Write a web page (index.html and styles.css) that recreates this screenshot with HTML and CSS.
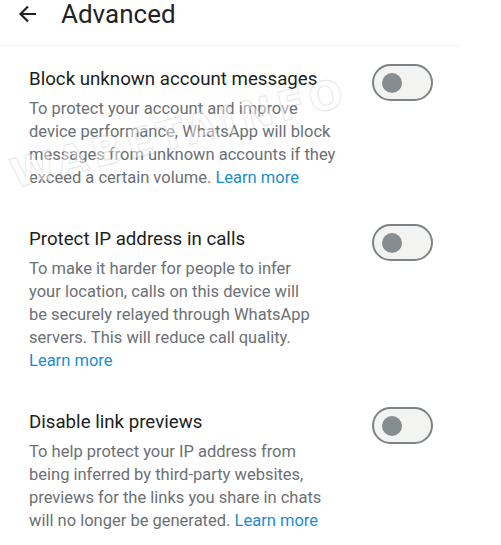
FILE: index.html
```html
<!DOCTYPE html>
<html lang="en">
  <head>
    <meta charset="UTF-8" />
    <meta name="viewport" content="width=device-width, initial-scale=1.0" />
    <title>Advanced</title>
    <link rel="stylesheet" href="styles.css">
  </head>
  <body>
    <div class="top-bar">
      <svg class="back" width="20" height="20" viewBox="0 0 20 20">
        <path d="M18 10H3M10 2.5L2.5 10L10 17.5" fill="none" stroke="#1f2326" stroke-width="2.2" />
      </svg>
      <h1>Advanced</h1>
    </div>
    <div class="settings">
      <div class="setting">
        <div class="setting-text">
          <h2>Block unknown account messages</h2>
          <p>To protect your account and improve device performance, WhatsApp will block messages from unknown accounts if they exceed a certain volume. <a href="#">Learn more</a></p>
        </div>
        <span class="toggle"><span class="knob"></span></span>
      </div>
      <div class="setting">
        <div class="setting-text">
          <h2>Protect IP address in calls</h2>
          <p>To make it harder for people to infer<br>your location, calls on this device will<br>be securely relayed through WhatsApp servers. This will reduce call quality.<br><a href="#">Learn more</a></p>
        </div>
        <span class="toggle"><span class="knob"></span></span>
      </div>
      <div class="setting">
        <div class="setting-text">
          <h2>Disable link previews</h2>
          <p>To help protect your IP address from being inferred by third-party websites, previews for the links you share in chats will no longer be generated. <a href="#">Learn more</a></p>
        </div>
        <span class="toggle"><span class="knob"></span></span>
      </div>
      <div class="watermark">WABETAINFO</div>
    </div>
  </body>
</html>
```
FILE: styles.css
```css
* {
  margin: 0;
  padding: 0;
  box-sizing: border-box;
}
body {
  font-family: Roboto, "Noto Sans", sans-serif;
  background: #fff;
  color: #1c1e21;
}
.top-bar {
  display: flex;
  align-items: flex-start;
  height: 46px;
  padding: 4px 0 0 18px;
  border-bottom: 1px solid #f3f3f3;
  width: 460px;
}
.back {
  display: block;
  margin-right: 23px;
}
h1 {
  margin-top: -3px;
  font-size: 26px;
  font-weight: 400;
  color: #1f2326;
  line-height: 26px;
}
.settings {
  position: relative;
  padding-top: 21px;
  display: flex;
  flex-direction: column;
  gap: 38px;
}
.setting {
  display: flex;
  align-items: flex-start;
  padding-left: 29px;
}
.setting-text {
  width: 309px;
}
h2 {
  font-size: 18.7px;
  font-weight: 400;
  line-height: 24px;
  color: #1c1e21;
}
p {
  margin-top: 6px;
  font-size: 16.5px;
  line-height: 23px;
  color: #6b7075;
}
a {
  color: #1b8ccf;
  text-decoration: none;
}
.toggle {
  display: flex;
  align-items: center;
  margin: -3px 0 0 34px;
  width: 61px;
  height: 37px;
  border: 2.5px solid #7b8386;
  border-radius: 19px;
  background: #f3f3f1;
  padding-left: 8px;
}
.knob {
  width: 20px;
  height: 20px;
  border-radius: 50%;
  background: #858d90;
}
.watermark {
  position: absolute;
  left: 15px;
  top: 113px;
  font-family: "DejaVu Sans", sans-serif;
  font-size: 40px;
  line-height: 30px;
  font-weight: 700;
  letter-spacing: 5px;
  color: rgba(255, 255, 255, 0.45);
  -webkit-text-stroke: 1.5px rgba(0, 0, 0, 0.09);
  transform: rotate(-14deg);
  transform-origin: left bottom;
  pointer-events: none;
}
```
